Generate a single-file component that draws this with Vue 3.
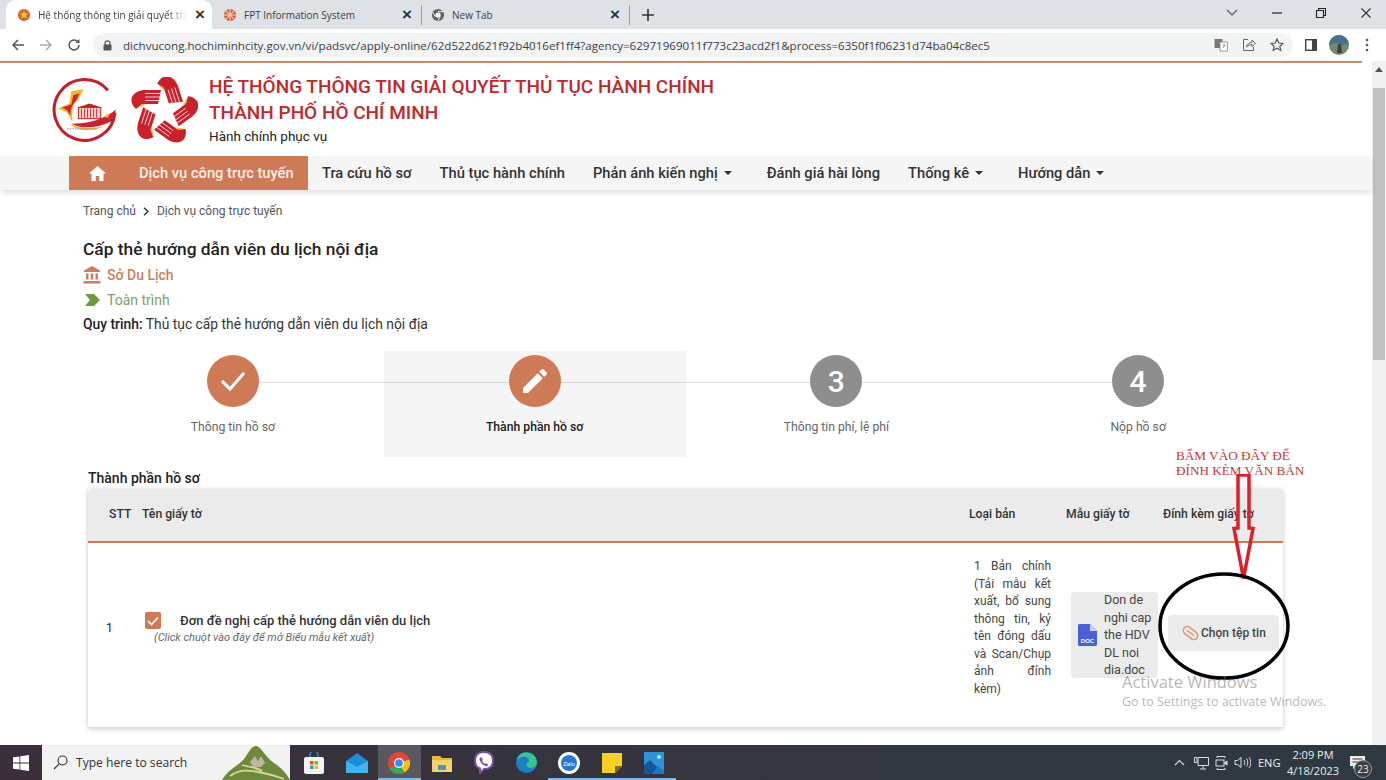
<script setup>
const navItems = [
  { label: 'Tra cứu hồ sơ' },
  { label: 'Thủ tục hành chính' },
  { label: 'Phản ánh kiến nghị', caret: true },
  { label: 'Đánh giá hài lòng' },
  { label: 'Thống kê', caret: true },
  { label: 'Hướng dẫn', caret: true }
]

const steps = [
  { label: 'Thông tin hồ sơ', icon: 'check', active: true },
  { label: 'Thành phần hồ sơ', icon: 'pen', active: true, current: true },
  { label: 'Thông tin phí, lệ phí', num: 3 },
  { label: 'Nộp hồ sơ', num: 4 }
]

const arms = [0, 72, 144, 216, 288]
const docLines = ['Don de', 'nghi cap', 'the HDV', 'DL noi', 'dia.doc']
const typeLines = ['1 Bản chính', '(Tải mẫu kết', 'xuất, bổ sung', 'thông tin, ký', 'tên đóng dấu', 'và Scan/Chụp', 'ảnh đính', 'kèm)']
</script>

<template>
  <div class="screen">
    <!-- tab strip -->
    <div class="tabstrip">
      <div class="tab tab-active">
        <svg class="favicon" viewBox="0 0 16 16">
          <circle cx="8" cy="8" r="7" fill="#d8672c" />
          <path d="M8 3l1.4 3.2 3.4.2-2.6 2.2.9 3.4L8 10.2 4.9 12l.9-3.4-2.6-2.2 3.4-.2z" fill="#f6c640" />
        </svg>
        <span class="tab-title fade">Hệ thống thông tin giải quyết th</span>
        <span class="tab-x">×</span>
      </div>
      <div class="tab tab-two">
        <svg class="favicon" viewBox="0 0 16 16">
          <circle cx="8" cy="8" r="7" fill="#dd5a3c" />
          <path d="M8 1v14M1 8h14M3 3l10 10M13 3L3 13" stroke="#f8d9c8" stroke-width="1.2" />
        </svg>
        <span class="tab-title">FPT Information System</span>
        <span class="tab-x">×</span>
      </div>
      <div class="tab tab-three">
        <svg class="favicon" viewBox="0 0 16 16">
          <circle cx="8" cy="8" r="7" fill="#5f6368" />
          <circle cx="8" cy="8" r="3" fill="#fff" />
          <path d="M8 4.2h6M5 10l-3-5M10.500 10.500L7.500 15" stroke="#fff" stroke-width="1" />
        </svg>
        <span class="tab-title">New Tab</span>
        <span class="tab-x">×</span>
      </div>
      <div class="tab-plus">
        <svg width="12" height="12" viewBox="0 0 12 12"><path d="M6 0v12M0 6h12" stroke="#333" stroke-width="1.6" /></svg>
      </div>
      <div class="win-controls">
        <svg width="12" height="8" viewBox="0 0 12 8"><path d="M1 1l5 5 5-5" fill="none" stroke="#555" stroke-width="1.1" /></svg>
        <svg width="12" height="12" viewBox="0 0 12 12"><path d="M1 6h10" stroke="#222" stroke-width="1.2" /></svg>
        <svg width="12" height="12" viewBox="0 0 12 12"><path d="M1.500 3.500h7v7h-7zM3.500 3.500v-2h7v7h-2" fill="none" stroke="#222" stroke-width="1.1" /></svg>
        <svg width="12" height="12" viewBox="0 0 12 12"><path d="M1.500 1.500l9 9M10.500 1.500l-9 9" stroke="#333" stroke-width="1.1" /></svg>
      </div>
    </div>

    <!-- address bar -->
    <div class="toolbar">
      <div class="nav-buttons">
        <svg width="14" height="14" viewBox="0 0 14 14"><path d="M13 7H2M7 2L2 7l5 5" fill="none" stroke="#555" stroke-width="1.5" /></svg>
        <svg width="14" height="14" viewBox="0 0 14 14"><path d="M1 7h11M7 2l5 5-5 5" fill="none" stroke="#a9abae" stroke-width="1.500" /></svg>
        <svg width="14" height="14" viewBox="0 0 14 14"><path d="M12 7a5 5 0 1 1-1.500-3.600" fill="none" stroke="#555" stroke-width="1.5" /><path d="M12.500 1v4h-4z" fill="#555" /></svg>
      </div>
      <div class="omnibox">
        <svg class="lock" width="9" height="11" viewBox="0 0 9 11"><path d="M2 5V3.300a2.500 2.500 0 0 1 5 0V5" fill="none" stroke="#555" stroke-width="1.200" /><rect x="0.500" y="4.500" width="8" height="6" rx="1" fill="#555" /></svg>
        <span class="url">dichvucong.hochiminhcity.gov.vn/vi/padsvc/apply-online/62d522d621f92b4016ef1ff4?agency=62971969011f773c23acd2f1&amp;process=6350f1f06231d74ba04c8ec5</span>
        <div class="omni-icons">
          <svg width="14" height="14" viewBox="0 0 14 14"><rect x="0.500" y="1" width="8" height="9" fill="#777" /><rect x="6" y="4" width="7.500" height="9" fill="#fff" stroke="#888" stroke-width="0.800" /><path d="M8.500 7h3M10 6v1M9 10l2-3" stroke="#777" stroke-width="0.700" /></svg>
          <svg width="14" height="14" viewBox="0 0 14 14"><path d="M6 1.500H1.500v11h10V9" fill="none" stroke="#666" stroke-width="1" /><path d="M4.500 9c.5-3 3-4.500 5.500-4.500V2l3.500 3.500L10 8.500V6.500c-2 0-4 .7-5.500 2.500z" fill="none" stroke="#666" stroke-width="1" /></svg>
          <svg width="14" height="14" viewBox="0 0 14 14"><path d="M7 1l1.800 4 4.200.4-3.200 2.800 1 4.200L7 10.200 3.200 12.400l1-4.200L1 5.400 5.200 5z" fill="none" stroke="#555" stroke-width="1.200" /></svg>
        </div>
      </div>
      <div class="tool-right">
        <svg width="12" height="12" viewBox="0 0 12 12"><rect x="0.700" y="0.700" width="10.600" height="10.600" fill="#fff" stroke="#444" stroke-width="1.400" /><rect x="7" y="1" width="4" height="10" fill="#444" /></svg>
        <svg class="avatar" width="20" height="20" viewBox="0 0 20 20">
          <circle cx="10" cy="10" r="10" fill="#6f8a6c" />
          <path d="M0 10a10 10 0 0 1 20 0c-3-2-4 0-7 0s-4-3-7-2-4 2-6 2z" fill="#4a6f8e" />
          <path d="M9 9h3l1 9H8z" fill="#3c3f3a" />
        </svg>
        <svg width="4" height="14" viewBox="0 0 4 14"><circle cx="2" cy="2" r="1.300" fill="#555" /><circle cx="2" cy="7" r="1.300" fill="#555" /><circle cx="2" cy="12" r="1.300" fill="#555" /></svg>
      </div>
    </div>

    <!-- page viewport -->
    <div class="viewport">
      <div class="page">
        <div class="top-rule"></div>
        <header class="site-head">
          <svg class="logo-g" viewBox="0 0 64 64">
            <path d="M55 13A30 30 0 1 0 62 35" fill="none" stroke="#c4202b" stroke-width="3" />
            <path d="M6 31l11-5 2-12 12-2-5 10c-4 3-6 8-6 14v8l-5-9z" fill="#f1b62b" />
            <path d="M10 30l9-3 2-9 6-2-3 7c-3 3-6 8-6 15l-3-5z" fill="#cf2530" />
            <path d="M19 46c16 0 32-4 44-14l-3 11C46 50 30 52 19 46z" fill="#cc2230" />
            <path d="M17 46c8 8 24 8 36 2-12 3-26 3-36-2z" fill="#f1b62b" />
            <rect x="26" y="30" width="22" height="11" fill="#f3d4c8" stroke="#c4202b" stroke-width="1" />
            <path d="M25 30l12-4 12 4z" fill="#c4202b" />
            <path d="M29 31v9M32 31v9M35 31v9M38 31v9M41 31v9M44 31v9" stroke="#c4202b" stroke-width="0.900" />
            <path d="M54 35l.8 2 2 .1-1.600 1.300.6 2-1.800-1.100-1.800 1.100.6-2-1.600-1.300 2-.1z" fill="#f7d038" />
            <path d="M15 51h30" stroke="#999" stroke-width="1.200" stroke-dasharray="1.500 1" />
          </svg>
          <svg class="logo-star" viewBox="-34 -34 68 68">
            <g v-for="a in arms" :key="a" :transform="`rotate(${a})`">
              <path d="M-3 -21L-20 -21C-32 -20 -37 -10 -28 -2L-22 -7L-6 -7z" fill="#c8202c" />
              <path d="M-28 -2L-22 -7L-18 -7z" fill="#f3b53a" />
              <path d="M-19 -17.500H-3.500M-19 -14H-4M-19 -10.500H-5" stroke="#f6d9d6" stroke-width="0.900" />
            </g>
          </svg>
          <div class="brand">
            <div class="brand-title">HỆ THỐNG THÔNG TIN GIẢI QUYẾT THỦ TỤC HÀNH CHÍNH</div>
            <div class="brand-title">THÀNH PHỐ HỒ CHÍ MINH</div>
            <div class="brand-sub">Hành chính phục vụ</div>
          </div>
        </header>

        <nav class="main-nav">
          <div class="nav-active">
            <svg width="17" height="15" viewBox="0 0 17 15"><path d="M8.500 0L0 7.500h2.500V15h4.300v-5h3.400v5h4.300V7.500H17z" fill="#fff" /></svg>
            <span>Dịch vụ công trực tuyến</span>
          </div>
          <div v-for="item in navItems" :key="item.label" class="nav-item">
            {{ item.label }}<i v-if="item.caret" class="caret"></i>
          </div>
        </nav>

        <main class="content">
          <div class="crumbs">
            <span>Trang chủ</span>
            <svg width="7" height="9" viewBox="0 0 7 9"><path d="M1 .8l4 3.700-4 3.700" fill="none" stroke="#333" stroke-width="1.400" /></svg>
            <span>Dịch vụ công trực tuyến</span>
          </div>
          <h1 class="proc-title">Cấp thẻ hướng dẫn viên du lịch nội địa</h1>
          <div class="meta meta-org">
            <svg width="18" height="18" viewBox="0 0 18 18"><path d="M9 0L1 4.500V6h16V4.500z" fill="#c77f60" /><path d="M3 7.500h2.500v6H3zM7.700 7.500h2.600v6H7.700zM12.500 7.500H15v6h-2.500z" fill="#c77f60" /><rect x="0.500" y="15" width="17" height="2.500" fill="#c77f60" /></svg>
            <span>Sở Du Lịch</span>
          </div>
          <div class="meta meta-type">
            <svg width="18" height="14" viewBox="0 0 18 14"><path d="M2 1h9l6 6-6 6H2l5-6z" fill="#6f9a3e" /></svg>
            <span>Toàn trình</span>
          </div>
          <p class="flow"><b>Quy trình:</b> Thủ tục cấp thẻ hướng dẫn viên du lịch nội địa</p>

          <div class="stepper">
            <div v-for="s in steps" :key="s.label" class="step" :class="{ current: s.current }">
              <div class="step-dot" :class="{ on: s.active }">
                <svg v-if="s.icon === 'check'" width="26" height="20" viewBox="0 0 26 20"><path d="M2 10l8 8L24 2" fill="none" stroke="#fff" stroke-width="3" /></svg>
                <svg v-else-if="s.icon === 'pen'" width="32" height="32" viewBox="0 0 24 24"><path d="M3 17.250V21h3.750L17.810 9.940l-3.750-3.750zM20.710 7.040a1 1 0 0 0 0-1.410l-2.340-2.340a1 1 0 0 0-1.410 0l-1.830 1.830 3.750 3.750z" fill="#fff" /></svg>
                <span v-else>{{ s.num }}</span>
              </div>
              <div class="step-label">{{ s.label }}</div>
            </div>
          </div>

          <h2 class="section-title">Thành phần hồ sơ</h2>
          <div class="table-card">
            <div class="table-head">
              <div class="col-stt">STT</div>
              <div class="cell">Tên giấy tờ</div>
              <div class="cell">Loại bản</div>
              <div class="cell">Mẫu giấy tờ</div>
              <div class="cell">Đính kèm giấy tờ</div>
            </div>
            <div class="table-row">
              <div class="row-no">1</div>
              <div class="doc-name">
                <div class="doc-line">
                  <span class="checkbox">
                    <svg width="12" height="10" viewBox="0 0 12 10"><path d="M1 5l3.500 3.500L11 1.500" fill="none" stroke="#fff" stroke-width="1.600" /></svg>
                  </span>
                  <span>Đơn đề nghị cấp thẻ hướng dẫn viên du lịch</span>
                </div>
                <div class="doc-hint">(Click chuột vào đây để mở Biểu mẫu kết xuất)</div>
              </div>
              <div class="doc-type">
                <div v-for="l in typeLines" :key="l" class="type-line">{{ l }}</div>
              </div>
              <div class="sample-wrap">
                <div class="sample">
                  <svg width="19" height="22" viewBox="0 0 19 22">
                    <path d="M1.500 0H12l7 7v13.500a1.500 1.500 0 0 1-1.500 1.500h-16A1.500 1.500 0 0 1 0 20.500V1.500A1.500 1.500 0 0 1 1.500 0z" fill="#4a5fd8" />
                    <path d="M12 0l7 7h-7z" fill="#c9d0f4" />
                    <text x="9.500" y="19" text-anchor="middle" class="doc-ext">DOC</text>
                  </svg>
                  <div class="sample-name">
                    <div v-for="l in docLines" :key="l">{{ l }}</div>
                  </div>
                </div>
              </div>
              <div class="attach-wrap">
                <div class="attach">
                  <svg width="17" height="16" viewBox="0 0 17 16">
                    <g transform="rotate(38 8.500 8)" fill="none" stroke="#dc9473" stroke-width="1.500">
                      <rect x="0.500" y="4" width="16" height="8" rx="4" />
                      <path d="M4 8h8.500" />
                    </g>
                  </svg>
                  <span>Chọn tệp tin</span>
                </div>
              </div>
            </div>
          </div>
        </main>
      </div>

      <!-- scrollbar -->
      <div class="scrollbar">
        <svg width="8" height="5" viewBox="0 0 8 5"><path d="M4 0l4 5H0z" fill="#555" /></svg>
        <div class="thumb"></div>
      </div>

      <!-- annotation drawn over the page -->
      <div class="note">BẤM VÀO ĐÂY ĐỂ<br />ĐÍNH KÈM VĂN BẢN</div>
      <svg class="markup" width="140" height="215" viewBox="0 0 140 215">
        <path d="M84 1h11v53l4 .5-9.500 50-9.500-50 4-.5z" fill="none" stroke="#db1f2c" stroke-width="3.500" />
        <ellipse cx="70" cy="152" rx="64" ry="52" fill="none" stroke="#000" stroke-width="3.500" />
      </svg>
      <div class="activate">
        <div class="activate-big">Activate Windows</div>
        <div class="activate-small">Go to Settings to activate Windows.</div>
      </div>
    </div>

    <!-- taskbar -->
    <footer class="taskbar">
      <div class="start">
        <svg width="16" height="16" viewBox="0 0 16 16"><path d="M0 2.300l6.500-.9v6.200H0zM7.300 1.300L16 0v7.600H7.300zM0 8.400h6.500v6.200L0 13.700zM7.300 8.400H16V16l-8.700-1.300z" fill="#fff" /></svg>
      </div>
      <div class="search">
        <svg width="15" height="15" viewBox="0 0 15 15"><circle cx="9.500" cy="5.500" r="4.500" fill="none" stroke="#333" stroke-width="1.100" /><path d="M6.200 8.800L1 14" stroke="#333" stroke-width="1.200" /></svg>
        <span>Type here to search</span>
        <svg class="mountain" width="68" height="35" viewBox="0 0 68 35">
          <path d="M0 35c6-10 14-13 20-19 5-4 8-15 14-15 5 0 10 12 18 17 6 4 12 9 16 17z" fill="#6d8a3c" />
          <path d="M8 31c10-7 18-6 28-4s18 4 26 7M20 20c6 2 14 2 20 6" fill="none" stroke="#d9d3a0" stroke-width="1.800" />
          <path d="M28 17l5-6 3 5 3-5 4 7-4 4h-8z" fill="#bdb4a2" />
        </svg>
      </div>
      <div class="task-icons">
        <div class="task-icon">
          <svg width="20" height="22" viewBox="0 0 20 22"><path d="M6 5V3a4 4 0 0 1 8 0v2" fill="none" stroke="#2a8fc9" stroke-width="1.500" /><rect x="0" y="5" width="20" height="17" rx="2" fill="#f4f4f4" /><rect x="6" y="9" width="3.500" height="3.500" fill="#e8562a" /><rect x="10.500" y="9" width="3.500" height="3.500" fill="#7eb92f" /><rect x="6" y="13.500" width="3.500" height="3.500" fill="#2a9fd8" /><rect x="10.500" y="13.500" width="3.500" height="3.500" fill="#f5bb1c" /></svg>
        </div>
        <div class="task-icon">
          <svg width="22" height="20" viewBox="0 0 22 20"><path d="M0 8l11-8 11 8v12H0z" fill="#1a8fd6" /><path d="M0 8l11 6 11-6v12H0z" fill="#43b3ee" /></svg>
        </div>
        <div class="task-icon task-on">
          <svg width="22" height="22" viewBox="0 0 22 22">
            <circle cx="11" cy="11" r="11" fill="#e0453a" />
            <path d="M11 11L1.500 16.500A11 11 0 0 0 11 22c2 0 4-.5 5.500-1.500z" fill="#37a853" />
            <path d="M11 11l5.500 9.500A11 11 0 0 0 21.500 7.500z" fill="#f5c21b" />
            <circle cx="11" cy="11" r="5" fill="#fff" /><circle cx="11" cy="11" r="3.800" fill="#4285f4" />
          </svg>
        </div>
        <div class="task-icon">
          <svg width="20" height="18" viewBox="0 0 20 18"><path d="M0 2h8l2 2h10v14H0z" fill="#e9b63f" /><rect x="0" y="6" width="20" height="12" fill="#f5d36a" /><rect x="6" y="11" width="8" height="5" fill="#4a98b5" /></svg>
        </div>
        <div class="task-icon">
          <svg width="20" height="23" viewBox="0 0 20 23"><path d="M10 1c6 0 9 3 9 8.500S16 18 10 18l-4 4v-4.500C2 16 1 13 1 9.500 1 4 4 1 10 1z" fill="#fff" stroke="#7d51a0" stroke-width="2" /><path d="M7 6l2 3-1 1c1 1.500 2 2.500 3 3l1-1 2.500 2c-1 1-2 1.500-3 1-3-1-5-3.500-6-6-.2-1 .5-2.500 1.500-3z" fill="#7d51a0" /></svg>
        </div>
        <div class="task-icon">
          <svg width="21" height="21" viewBox="0 0 21 21"><circle cx="10.500" cy="10.500" r="10.500" fill="#1b80c4" /><path d="M21 11c0-6-4.500-10.500-10.500-10.500C5 .5 1.500 4 .8 8c2-3 6-4 9-3 3 1 3.500 3 3 5-2 .5-3 2-2 4s5 2.500 7 1c2-1 3.200-2.500 3.200-4z" fill="#35c58d" /></svg>
        </div>
        <div class="task-icon running">
          <svg width="22" height="22" viewBox="0 0 22 22"><circle cx="11" cy="11" r="11" fill="#fff" /><path d="M3 11a8 8 0 0 1 16 0 8 8 0 0 1-16 0z" fill="#2a78d6" /><text x="11" y="13.500" text-anchor="middle" class="zalo">Zalo</text></svg>
        </div>
        <div class="task-icon running">
          <svg width="20" height="20" viewBox="0 0 20 20"><path d="M0 0h20v13l-7 7H0z" fill="#f5d027" /><path d="M13 20v-7h7z" fill="#7b6a1c" /></svg>
        </div>
        <div class="task-icon running">
          <svg width="20" height="22" viewBox="0 0 20 22"><rect width="20" height="22" fill="#2f93d8" /><path d="M0 22V13l6-5 14 14z" fill="#13589e" /><path d="M8 22l6-8 6 5v3z" fill="#1b78c4" /><circle cx="15" cy="5" r="2" fill="#bfe4f8" /></svg>
        </div>
      </div>
      <div class="tray">
        <svg class="tray-up" width="11" height="7" viewBox="0 0 11 7"><path d="M1 6l4.500-4.500L10 6" fill="none" stroke="#ddd" stroke-width="1.200" /></svg>
        <svg width="15" height="14" viewBox="0 0 15 14"><path d="M4 1.500h10.500v8H4zM9 9.500V13M6 13h6M.5 1.500h2.500v5H.5z" fill="none" stroke="#ddd" stroke-width="1" /></svg>
        <svg width="13" height="16" viewBox="0 0 13 16"><path d="M2 3V1.500h8V3M2 13v1.500h8V13" fill="none" stroke="#ddd" stroke-width="1" /><rect x="1" y="5" width="8" height="6" fill="none" stroke="#ddd" stroke-width="1" /><path d="M9.500 7l3-1.500v5L9.500 9z" fill="#ddd" /></svg>
        <svg class="tray-vol" width="17" height="13" viewBox="0 0 17 13"><path d="M1 4.500h2.500L7 1.500v10L3.500 8.500H1zM10 4c1 1.500 1 3.500 0 5M12.500 2.500c1.700 2.500 1.700 5.500 0 8M15 1c2.300 3.300 2.300 7.700 0 11" fill="none" stroke="#ddd" stroke-width="1" /></svg>
        <span class="lang">ENG</span>
        <div class="clock">
          <div>2:09 PM</div>
          <div>4/18/2023</div>
        </div>
        <div class="notify">
          <svg width="15" height="14" viewBox="0 0 15 14"><path d="M0 0h15v10H6l-3 3v-3H0z" fill="#eee" /><path d="M2.500 3h10M2.500 6h10" stroke="#333" stroke-width="1" /></svg>
          <span class="badge">23</span>
        </div>
      </div>
    </footer>
  </div>
</template>

<style scoped>
.screen {
  width: 1386px;
  height: 780px;
  display: flex;
  flex-direction: column;
  overflow: hidden;
  background: #fff;
  font-family: Roboto, "Noto Sans", sans-serif;
  color: #222;
}

/* tab strip */
.tabstrip {
  height: 29px;
  flex: none;
  display: flex;
  align-items: center;
  background: #dee1e6;
  font-family: "Open Sans", sans-serif;
  font-size: 10px;
  color: #3c4043;
  padding-left: 6px;
}
.tab {
  height: 29px;
  display: flex;
  align-items: center;
  flex: none;
  position: relative;
  box-sizing: border-box;
}
.tab-active {
  width: 206px;
  background: #fff;
  border-radius: 10px 10px 0 0;
  padding-left: 11px;
}
.tab-two {
  width: 210px;
  padding-left: 11px;
  border-right: 1px solid #9a9da1;
  height: 20px;
}
.tab-three {
  width: 208px;
  padding-left: 9px;
  height: 20px;
  border-right: 1px solid #9a9da1;
}
.favicon {
  width: 14px;
  height: 14px;
  flex: none;
  margin-right: 7px;
}
.tab-title {
  white-space: nowrap;
}
.fade {
  -webkit-mask-image: linear-gradient(to right, #000 88%, transparent);
  mask-image: linear-gradient(to right, #000 88%, transparent);
}
.tab-x {
  position: absolute;
  right: 9px;
  font-size: 17px;
  line-height: 1;
  font-weight: 600;
  color: #333;
  font-family: "Liberation Sans", sans-serif;
}
.tab-active .tab-x {
  right: 7px;
}
.tab-plus {
  margin-left: 12px;
  display: flex;
}
.win-controls {
  margin-left: auto;
  width: 146px;
  display: flex;
  align-items: center;
  justify-content: space-between;
  margin-right: 14px;
  padding-bottom: 4px;
}

/* toolbar */
.toolbar {
  height: 32px;
  flex: none;
  display: flex;
  align-items: center;
  background: #fff;
}
.nav-buttons {
  width: 93px;
  flex: none;
  display: flex;
  justify-content: space-between;
  padding: 0 12px 0 11px;
  box-sizing: border-box;
}
.omnibox {
  width: 1200px;
  height: 24px;
  flex: none;
  display: flex;
  align-items: center;
  background: #f1f3f4;
  border-radius: 12px;
  padding-left: 10px;
  box-sizing: border-box;
}
.lock {
  margin-right: 11px;
}
.url {
  font-family: "Open Sans", sans-serif;
  font-size: 11.580px;
  color: #3c4043;
  white-space: nowrap;
}
.omni-icons {
  margin-left: auto;
  display: flex;
  gap: 14px;
  padding-right: 9px;
}
.tool-right {
  flex: 1;
  display: flex;
  align-items: center;
  gap: 12px;
  padding-left: 12px;
}
.avatar + svg {
  margin-left: 4px;
}

/* page */
.viewport {
  flex: 1;
  min-height: 0;
  display: flex;
  position: relative;
  overflow: hidden;
}
.page {
  flex: 1;
  min-width: 0;
}
.scrollbar {
  width: 14px;
  flex: none;
  background: #f1f1f1;
  display: flex;
  flex-direction: column;
  align-items: center;
  padding-top: 6px;
  box-sizing: border-box;
}
.thumb {
  width: 12px;
  height: 272px;
  margin-top: 16px;
  background: #c1c1c1;
}
.top-rule {
  height: 2px;
  width: 1362px;
  background: #c98a70;
}
.site-head {
  height: 93px;
  display: flex;
  align-items: center;
  padding-left: 52px;
  box-sizing: border-box;
}
.logo-g {
  width: 65px;
  height: 65px;
  flex: none;
  margin-right: 13px;
}
.logo-star {
  width: 68px;
  height: 68px;
  flex: none;
  margin: 3px 11px 0 0;
}
.brand {
  padding-top: 1px;
}
.brand-title {
  font-size: 19px;
  font-weight: 500;
  line-height: 26px;
  color: #bd2a2e;
  white-space: nowrap;
}
.brand-sub {
  font-size: 13.500px;
  line-height: 20px;
  color: #222;
}
.main-nav {
  height: 34px;
  display: flex;
  align-items: center;
  padding-left: 69px;
  background: #f5f5f5;
  box-shadow: 0 3px 5px rgba(0, 0, 0, 0.12);
  position: relative;
  font-size: 14.700px;
  font-weight: 500;
  color: #333;
}
.nav-active {
  width: 239px;
  height: 34px;
  flex: none;
  display: flex;
  align-items: center;
  padding-left: 20px;
  box-sizing: border-box;
  gap: 33px;
  background: #cf7a56;
  color: #fbeee8;
  margin-right: 14px;
}
.nav-item {
  margin-right: 28px;
  white-space: nowrap;
  display: flex;
  align-items: center;
}
.caret {
  width: 0;
  height: 0;
  margin-left: 6px;
  margin-right: 7px;
  border: 4.500px solid transparent;
  border-top-color: #333;
  border-bottom: 0;
}
.content {
  padding: 0 83px;
}
.crumbs {
  height: 42px;
  display: flex;
  align-items: center;
  gap: 7px;
  font-size: 12px;
  color: #555;
}
.proc-title {
  margin: 5px 0 0;
  font-size: 17.350px;
  line-height: 24px;
  font-weight: 500;
  color: #222;
}
.meta {
  height: 25px;
  display: flex;
  align-items: center;
  gap: 6px;
  font-size: 14px;
}
.meta-org {
  margin-top: 1px;
  color: #c77f60;
  font-weight: 500;
}
.meta-type {
  color: #7f9e62;
}
.flow {
  margin: 0;
  font-size: 13.850px;
  line-height: 24px;
  color: #333;
}
.flow b {
  font-weight: 500;
  color: #222;
}
.stepper {
  margin: 15px 0 0 -1px;
  height: 106px;
  display: grid;
  grid-template-columns: repeat(4, 1fr);
  position: relative;
}
.stepper::before {
  content: "";
  position: absolute;
  top: 31px;
  left: 150px;
  right: 150px;
  height: 1px;
  background: #ddd;
}
.step {
  position: relative;
  display: flex;
  flex-direction: column;
  align-items: center;
  padding-top: 4px;
  box-sizing: border-box;
  font-size: 12.200px;
  color: #666;
}
.step.current {
  background: rgba(0, 0, 0, 0.04);
  color: #222;
  font-weight: 500;
}
.step-dot {
  width: 52px;
  height: 52px;
  border-radius: 50%;
  display: flex;
  align-items: center;
  justify-content: center;
  background: #8e8e8e;
  color: #fff;
  font-size: 30px;
  font-weight: 500;
  position: relative;
}
.step-dot.on {
  background: #cf7a56;
}
.step-label {
  margin-top: 12px;
  line-height: 16px;
}
.section-title {
  margin: 12px 0 0 5px;
  font-size: 14px;
  line-height: 18px;
  font-weight: 500;
  color: #222;
}
.table-card {
  margin: 2px 6px 0 5px;
  box-shadow: 0 1px 5px rgba(0, 0, 0, 0.22);
  font-size: 12.200px;
}
.table-head,
.table-row {
  display: grid;
  grid-template-columns: 49px 827px 97px 97px 125px;
}
.table-head {
  height: 54px;
  padding-bottom: 2px;
  align-items: center;
  background: #ebebeb;
  border-bottom: 2px solid #cf7a56;
  box-sizing: border-box;
  border-radius: 3px 3px 0 0;
  font-weight: 500;
  color: #333;
}
.col-stt {
  padding-left: 21px;
}
.cell {
  padding-left: 5px;
  white-space: nowrap;
}
.table-row {
  height: 185px;
  padding-bottom: 14px;
  align-items: center;
  background: #fff;
  border-bottom: 1px solid #ddd;
  box-sizing: border-box;
}
.row-no {
  padding-left: 18px;
}
.doc-name {
  padding-left: 8px;
}
.doc-line {
  display: flex;
  align-items: center;
  gap: 19px;
  font-size: 13px;
  font-weight: 500;
  color: #333;
}
.checkbox {
  width: 16px;
  height: 17px;
  border-radius: 2px;
  background: #cf7a56;
  display: flex;
  align-items: center;
  justify-content: center;
}
.doc-hint {
  margin-left: 9px;
  margin-top: 2px;
  font-size: 11px;
  font-style: italic;
  color: #666;
}
.doc-type {
  width: 77px;
  margin-left: 10px;
  font-size: 12px;
  line-height: 17.500px;
  color: #444;
}
.type-line {
  white-space: nowrap;
  text-align: justify;
  text-align-last: justify;
}
.type-line:last-child {
  text-align-last: left;
}
.sample-wrap,
.attach-wrap {
  display: flex;
  padding-left: 10px;
}
.sample-wrap {
  margin-top: 14px;
}
.attach-wrap {
  margin-top: 10px;
}
.sample {
  width: 88px;
  height: 86px;
  display: flex;
  align-items: center;
  gap: 7px;
  padding-left: 7px;
  box-sizing: border-box;
  border-radius: 4px;
  background: #ebebeb;
  color: #444;
  font-size: 12.500px;
}
.doc-ext {
  fill: #fff;
  font-size: 6px;
  font-weight: 700;
  font-family: "Liberation Sans", sans-serif;
}
.sample-name {
  line-height: 17.500px;
}
.attach {
  width: 111px;
  height: 36px;
  display: flex;
  align-items: center;
  gap: 2px;
  padding-left: 14px;
  box-sizing: border-box;
  border-radius: 4px;
  background: #ebebeb;
  font-size: 12px;
  font-weight: 500;
  color: #444;
}

/* annotation overlay */
.note {
  position: absolute;
  left: 1176px;
  top: 387px;
  font-family: "Liberation Serif", serif;
  font-size: 13.200px;
  line-height: 15px;
  color: #c13a33;
  white-space: nowrap;
}
.markup {
  position: absolute;
  left: 1154px;
  top: 413px;
}
.activate {
  position: absolute;
  left: 1122px;
  top: 610px;
  font-family: "Open Sans", sans-serif;
  color: rgba(120, 120, 120, 0.55);
  white-space: nowrap;
}
.activate-big {
  font-size: 16.500px;
  line-height: 22px;
}
.activate-small {
  font-size: 12.470px;
  line-height: 17px;
}

/* taskbar */
.taskbar {
  height: 35px;
  flex: none;
  display: flex;
  align-items: stretch;
  background: linear-gradient(to right, #3a2f3a, #2e3a42);
  color: #eee;
}
.start {
  width: 42px;
  flex: none;
  display: flex;
  align-items: center;
  justify-content: center;
}
.search {
  width: 248px;
  flex: none;
  display: flex;
  align-items: center;
  gap: 8px;
  padding-left: 11px;
  box-sizing: border-box;
  background: #f2f2f2;
  color: #333;
  font-family: "Open Sans", sans-serif;
  font-size: 12.100px;
  position: relative;
}
.mountain {
  position: absolute;
  right: 0;
  top: 0;
}
.task-icons {
  display: flex;
  padding-left: 3px;
}
.task-icon {
  width: 42.500px;
  display: flex;
  align-items: center;
  justify-content: center;
}
.task-on {
  background: rgba(255, 255, 255, 0.18);
  box-shadow: inset 0 -2px 0 #76b9ed;
}
.running {
  box-shadow: inset 0 -2px 0 #76b9ed;
}
.zalo {
  fill: #fff;
  font-size: 6px;
  font-family: "Liberation Sans", sans-serif;
}
.tray {
  margin-left: auto;
  display: flex;
  align-items: center;
  font-family: "Open Sans", sans-serif;
  font-size: 11px;
}
.tray > svg {
  margin-right: 6px;
}
.tray > .tray-up {
  margin-right: 9px;
}
.tray > .tray-vol {
  margin-right: 7px;
}
.lang {
  width: 24px;
}
.clock {
  width: 62px;
  text-align: center;
  line-height: 16px;
}
.notify {
  width: 42px;
  height: 100%;
  position: relative;
  display: flex;
  align-items: center;
  padding-left: 6px;
  box-sizing: border-box;
}
.badge {
  position: absolute;
  left: 10px;
  top: 15px;
  width: 16px;
  height: 16px;
  border-radius: 50%;
  background: #3a3f44;
  border: 1px solid #999;
  font-size: 10px;
  line-height: 16px;
  text-align: center;
}
</style>

<style>
html,
body {
  margin: 0;
  overflow: hidden;
}
</style>
